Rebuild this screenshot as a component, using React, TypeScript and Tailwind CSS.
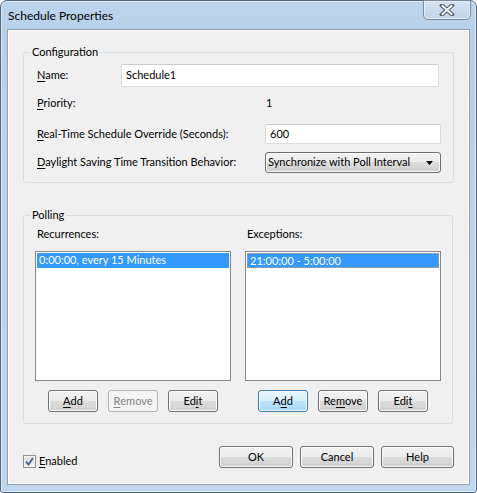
import type { ReactNode } from "react";

type BtnKind = "normal" | "default" | "disabled";

const BTN_BG: Record<BtnKind, string> = {
  normal:
    "border-[#707070] text-black bg-[linear-gradient(#f2f2f2,#ebebeb_50%,#dddddd_50%,#cfcfcf)] shadow-[inset_0_0_0_1px_#fcfcfc]",
  default:
    "border-[#3c7fb1] text-black bg-[linear-gradient(#eaf6fd,#d9f0fc_50%,#bee6fd_50%,#a7d9f5)] shadow-[inset_0_0_0_1px_#f4fbff]",
  disabled: "border-[#adb2b5] text-[#838383] bg-[#f4f4f4]",
};

function Btn({
  children,
  kind = "normal",
  className = "",
}: {
  children: ReactNode;
  kind?: BtnKind;
  className?: string;
}) {
  return (
    <button
      type="button"
      className={`flex items-center justify-center rounded-[3px] border ${BTN_BG[kind]} ${className}`}
    >
      {children}
    </button>
  );
}

function Acc({ children }: { children: ReactNode }) {
  return <span className="underline underline-offset-[2px]">{children}</span>;
}

function TextBox({ value, className = "" }: { value: string; className?: string }) {
  return (
    <div
      className={`flex items-center rounded-[2px] border border-[#d9dadc] border-t-[#c9cbcf] bg-white px-[4px] ${className}`}
    >
      {value}
    </div>
  );
}

function ListBox({
  item,
  focused = false,
}: {
  item: string;
  focused?: boolean;
}) {
  return (
    <div className="h-[130px] w-[196px] border border-[#828790] bg-white p-[1px]">
      <div
        className={`h-[15px] bg-[#3399ff] pl-[2px] leading-[14px] text-white ${
          focused ? "border border-dotted border-[#e0a050]" : ""
        }`}
      >
        {item}
      </div>
    </div>
  );
}

export default function App() {
  return (
    <div className="h-[493px] w-[477px] font-['Segoe_UI','Lato',sans-serif] text-[11px] text-black">
      <div className="relative h-[493px] w-[477px] rounded-t-[7px] rounded-b-[3px] border border-[#56667a] bg-[linear-gradient(#bcd4ee,#b7cfe9_40px,#c0d6ee)] shadow-[inset_0_0_0_1px_#dde9f5]">
        <div className="flex h-[28px] items-center pl-[7px] pt-[2px] text-[12px]">
          Schedule Properties
        </div>
        <div className="absolute right-[5px] top-[-1px] flex h-[20px] w-[48px] items-center justify-center rounded-b-[5px] border border-[#7a8899] bg-[linear-gradient(#d6e3f1,#c2d4ea)] shadow-[inset_0_0_0_1px_#e6eef8]">
          <svg width="16" height="12" viewBox="0 0 16 12">
            <path d="M3 1.5 L13 10.5 M13 1.5 L3 10.5" stroke="#4a5260" strokeWidth="4" strokeLinecap="square" />
            <path d="M3.5 2 L12.5 10 M12.5 2 L3.5 10" stroke="#ffffff" strokeWidth="2" strokeLinecap="square" />
          </svg>
        </div>

        <div className="mx-[6px] h-[456px] border border-[#8da2b9] bg-[#f0f0f0] shadow-[inset_0_0_0_1px_#ffffff]">
          <div className="flex flex-col pl-[15px] pt-[14px]">
            <fieldset className="h-[139px] w-[431px] rounded-[3px] border border-[#d5dfe5]">
              <legend className="ml-[6px] px-[2px] leading-[16px]">Configuration</legend>
              <div className="pl-[13px]">
                <div className="mt-[4px] flex h-[23px] items-center">
                  <span className="w-[84px]">
                    <Acc>N</Acc>ame:
                  </span>
                  <TextBox value="Schedule1" className="h-[23px] w-[318px]" />
                </div>
                <div className="mt-[6px] flex h-[20px] items-center">
                  <span className="w-[228px]">
                    <Acc>P</Acc>riority:
                  </span>
                  <span className="pl-[1px]">1</span>
                </div>
                <div className="mt-[11px] flex h-[20px] items-center">
                  <span className="w-[228px]">
                    <Acc>R</Acc>eal-Time Schedule Override (Seconds):
                  </span>
                  <TextBox value="600" className="h-[20px] w-[176px]" />
                </div>
                <div className="mt-[8px] flex h-[21px] items-center">
                  <span className="w-[228px]">
                    <Acc>D</Acc>aylight Saving Time Transition Behavior:
                  </span>
                  <div className="flex h-[21px] w-[176px] items-center justify-between rounded-[3px] border border-[#707070] bg-[linear-gradient(#f2f2f2,#ebebeb_50%,#dddddd_50%,#cfcfcf)] pl-[2px] pr-[7px] shadow-[inset_0_0_0_1px_#fcfcfc]">
                    <span>Synchronize with Poll Interval</span>
                    <svg width="7" height="4" viewBox="0 0 7 4">
                      <path d="M0 0 H7 L3.5 4 Z" fill="#000" />
                    </svg>
                  </div>
                </div>
              </div>
            </fieldset>

            <fieldset className="mt-[24px] h-[217px] w-[430px] rounded-[3px] border border-[#d5dfe5]">
              <legend className="ml-[6px] px-[2px] leading-[16px]">Polling</legend>
              <div className="flex gap-[14px] pl-[11px]">
                <div className="flex flex-col">
                  <span className="mt-[3px] pl-[2px] leading-[16px]">Recurrences:</span>
                  <div className="mt-[9px]">
                    <ListBox item="0:00:00, every 15 Minutes" />
                  </div>
                  <div className="mt-[9px] flex justify-center gap-[10px]">
                    <Btn className="h-[22px] w-[50px]">
                      <Acc>A</Acc>dd
                    </Btn>
                    <Btn kind="disabled" className="h-[22px] w-[50px]">
                      <Acc>R</Acc>emove
                    </Btn>
                    <Btn className="h-[22px] w-[50px]">
                      Ed<Acc>i</Acc>t
                    </Btn>
                  </div>
                </div>
                <div className="flex flex-col">
                  <span className="mt-[3px] pl-[2px] leading-[16px]">Exceptions:</span>
                  <div className="mt-[9px]">
                    <ListBox item="21:00:00 - 5:00:00" focused />
                  </div>
                  <div className="mt-[9px] flex justify-center gap-[10px]">
                    <Btn kind="default" className="h-[22px] w-[50px]">
                      A<Acc>d</Acc>d
                    </Btn>
                    <Btn className="h-[22px] w-[50px]">
                      Re<Acc>m</Acc>ove
                    </Btn>
                    <Btn className="h-[22px] w-[50px]">
                      Edi<Acc>t</Acc>
                    </Btn>
                  </div>
                </div>
              </div>
            </fieldset>

            <div className="mt-[22px] flex h-[22px] items-center pr-[15px]">
              <span className="mt-[8px] flex items-center">
                <span className="flex h-[13px] w-[13px] items-center justify-center border border-[#8e8f8f] bg-[linear-gradient(135deg,#d8d8d8,#f6f6f6)] shadow-[inset_0_0_0_1px_#f4f4f4]">
                  <svg width="9" height="9" viewBox="0 0 9 9">
                    <path d="M1 4.5 L3.5 7.5 L8 1" stroke="#4a5d91" strokeWidth="1.8" fill="none" />
                  </svg>
                </span>
                <span className="ml-[3px]">
                  <Acc>E</Acc>nabled
                </span>
              </span>
              <div className="ml-auto flex gap-[7px]">
                <Btn className="h-[22px] w-[74px]">OK</Btn>
                <Btn className="h-[22px] w-[74px]">Cancel</Btn>
                <Btn className="h-[22px] w-[73px]">Help</Btn>
              </div>
            </div>
          </div>
        </div>
      </div>
    </div>
  );
}
